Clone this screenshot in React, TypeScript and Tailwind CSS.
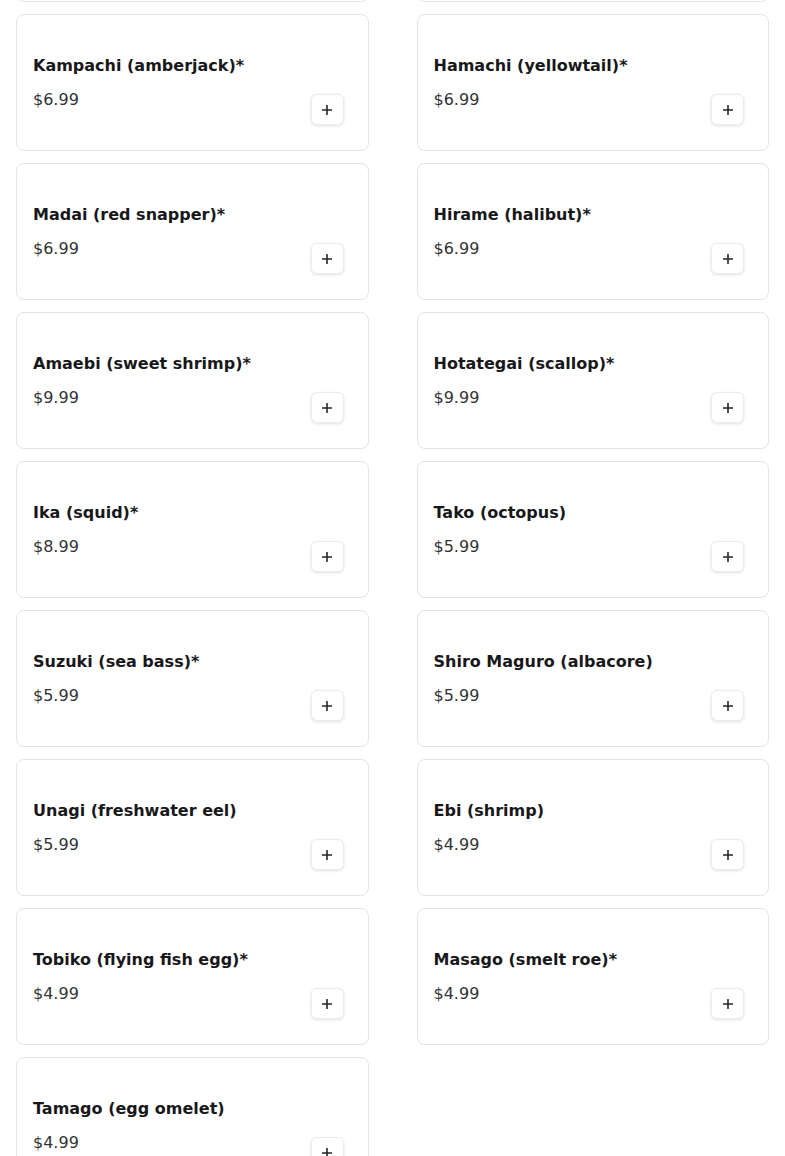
const items = [
  { name: 'Kampachi (amberjack)*', price: '$6.99' },
  { name: 'Hamachi (yellowtail)*', price: '$6.99' },
  { name: 'Madai (red snapper)*', price: '$6.99' },
  { name: 'Hirame (halibut)*', price: '$6.99' },
  { name: 'Amaebi (sweet shrimp)*', price: '$9.99' },
  { name: 'Hotategai (scallop)*', price: '$9.99' },
  { name: 'Ika (squid)*', price: '$8.99' },
  { name: 'Tako (octopus)', price: '$5.99' },
  { name: 'Suzuki (sea bass)*', price: '$5.99' },
  { name: 'Shiro Maguro (albacore)', price: '$5.99' },
  { name: 'Unagi (freshwater eel)', price: '$5.99' },
  { name: 'Ebi (shrimp)', price: '$4.99' },
  { name: 'Tobiko (flying fish egg)*', price: '$4.99' },
  { name: 'Masago (smelt roe)*', price: '$4.99' },
  { name: 'Tamago (egg omelet)', price: '$4.99' }
];

const PlusIcon = () => (
  <svg width="10" height="10" viewBox="0 0 10 10" fill="none">
    <path d="M5 0.5v9M0.5 5h9" stroke="#262626" strokeWidth="1.6" strokeLinecap="round" />
  </svg>
);

const MenuCard = ({ name, price }: { name: string; price: string }) => {
  return (
    <div className="flex h-[137px] justify-between rounded-lg border border-[#e4e4e7] bg-white pl-4 pr-6 pb-[25px] pt-[39px]">
      <div className="flex flex-col self-start">
        <h3 className="text-base leading-6 font-bold text-[#18181b]">{name}</h3>
        <p className="mt-2.5 text-base leading-6 text-[#333336]">{price}</p>
      </div>
      <button className="flex h-[31px] w-[33px] items-center justify-center self-end rounded-md border border-[#ececef] bg-white shadow-[0_1px_3px_rgba(0,0,0,0.12)]">
        <PlusIcon />
      </button>
    </div>
  );
};

export default function App() {
  return (
    <div className="h-[1156px] overflow-hidden bg-white font-['DejaVu_Sans',sans-serif]">
      <div className="-mt-[135px] grid grid-cols-2 gap-x-12 gap-y-3 px-4">
        {/* previous row, scrolled out of view */}
        <div className="h-[137px] rounded-lg border border-[#e4e4e7] bg-white" />
        <div className="h-[137px] rounded-lg border border-[#e4e4e7] bg-white" />
        {items.map((item) => (
          <MenuCard key={item.name} name={item.name} price={item.price} />
        ))}
      </div>
    </div>
  );
}
